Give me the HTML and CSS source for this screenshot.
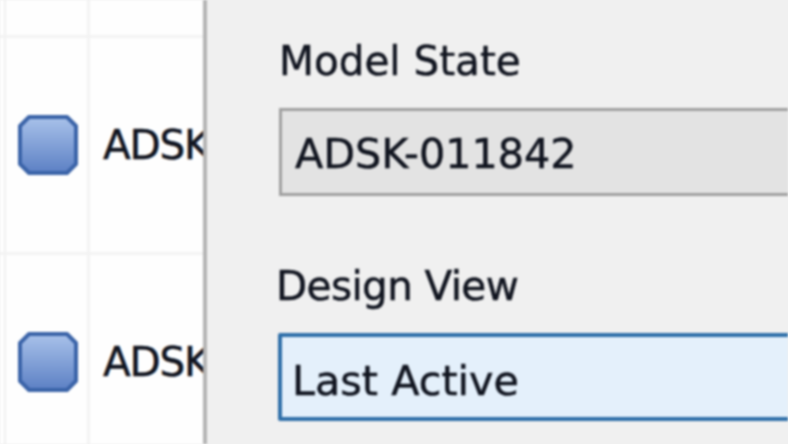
FILE: index.html
```html
<!DOCTYPE html>
<html lang="en">
<head>
<meta charset="utf-8">
<title>Model State</title>
<link rel="stylesheet" href="styles.css">
</head>
<body>
<div class="app">
  <div class="table">
    <div class="row row-top"><div class="cell-a"></div><div class="cell-b"></div></div>
    <div class="row row-mid">
      <div class="cell-a"><svg class="icon" viewBox="0 0 60 60"><defs><linearGradient id="g1" x1="0" y1="0" x2="0" y2="1"><stop offset="0" stop-color="#a9c2ea"/><stop offset="1" stop-color="#5c80c4"/></linearGradient></defs><path d="M11 2H49L58 11V49L49 58H11L2 49V11Z" fill="url(#g1)" stroke="#3a63a8" stroke-width="4" stroke-linejoin="round"/></svg></div>
      <div class="cell-b"><span class="cell-text">ADSK</span></div>
    </div>
    <div class="row row-mid">
      <div class="cell-a"><svg class="icon" viewBox="0 0 60 60"><path d="M11 2H49L58 11V49L49 58H11L2 49V11Z" fill="url(#g1)" stroke="#3a63a8" stroke-width="4" stroke-linejoin="round"/></svg></div>
      <div class="cell-b"><span class="cell-text">ADSK</span></div>
    </div>
  </div>
  <div class="panel">
    <label class="label label-model">Model State</label>
    <div class="field field-disabled">ADSK-011842</div>
    <label class="label label-view">Design View</label>
    <div class="field field-active">Last Active</div>
  </div>
</div>
</body>
</html>
```
FILE: styles.css
```css
html, body {
  margin: 0;
  padding: 0;
  width: 788px;
  height: 444px;
  overflow: hidden;
  background: #f0f0f0;
}
.app {
  display: grid;
  grid-template-columns: 207px 1fr;
  height: 444px;
  overflow: hidden;
  font-family: "DejaVu Sans", sans-serif;
  font-size: 40.5px;
  color: #10141f;
  -webkit-text-stroke: 0.5px #10141f;
  filter: blur(1px);
}
.table {
  background: #fefefe;
  border-right: 4px solid #b4b4b4;
  overflow: hidden;
  box-sizing: border-box;
}
.row {
  display: grid;
  grid-template-columns: 6px 84px 1fr;
  border-bottom: 3px solid #f3f3f3;
  box-sizing: border-box;
}
.row::before {
  content: "";
  border-right: 2px solid #f0f0f0;
}
.row-top { height: 38px; }
.row-mid { height: 217px; }
.cell-a {
  border-right: 3px solid #f3f3f3;
  display: flex;
  align-items: center;
  padding-left: 12px;
}
.cell-b {
  display: flex;
  align-items: center;
  padding-left: 13px;
  white-space: nowrap;
  overflow: hidden;
}
.cell-text {
  letter-spacing: -1.2px;
}
.icon {
  width: 60px;
  height: 60px;
  flex: none;
}
.panel {
  display: flex;
  flex-direction: column;
  padding: 36px 0 0 72px;
  overflow: hidden;
  white-space: nowrap;
}
.label {
  display: block;
  line-height: 50px;
}
.label-view {
  margin-left: -3px;
  margin-top: 65px;
  letter-spacing: -0.6px;
}
.field {
  box-sizing: border-box;
  height: 88px;
  width: 600px;
  margin-top: 22px;
  line-height: 86px;
  padding-left: 13px;
  font-size: 41.3px;
  -webkit-text-stroke: 0.5px #10141f;
}
.field-disabled {
  background: #e3e3e3;
  border: 3px solid #a0a0a0;
}
.field-active {
  margin-left: -1px;
  margin-top: 22px;
  padding-top: 2px;
  line-height: 84px;
  background: #e4f0fb;
  border: 4px solid #2f6fa9;
  border-radius: 2px;
  padding-left: 10px;
}
```
